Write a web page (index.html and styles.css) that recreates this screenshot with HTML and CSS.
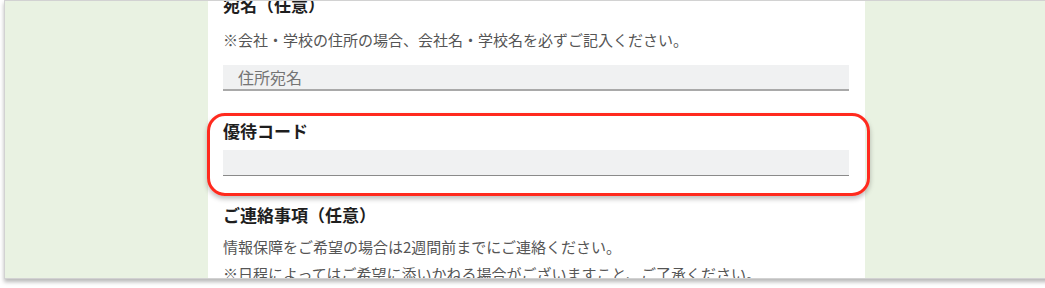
FILE: index.html
```html
<!DOCTYPE html>
<html lang="ja">
<head>
<meta charset="utf-8">
<link rel="stylesheet" href="styles.css">
</head>
<body>
<div class="shot">
  <div class="column">
    <h2 class="label label-first">宛名（任意）</h2>
    <p class="note">※会社・学校の住所の場合、会社名・学校名を必ずご記入ください。</p>
    <div class="field field-thick"><span class="placeholder">住所宛名</span></div>

    <div class="highlight">
      <h2 class="label">優待コード</h2>
      <div class="field field-thin"></div>
    </div>

    <h2 class="label label-third">ご連絡事項（任意）</h2>
    <p class="note note-a">情報保障をご希望の場合は2週間前までにご連絡ください。</p>
    <p class="note note-b">※日程によってはご希望に添いかねる場合がございますこと、ご了承ください。</p>
  </div>
</div>
</body>
</html>
```

FILE: styles.css
```css
html, body {
  margin: 0;
  padding: 0;
  background: #ffffff;
}

body {
  width: 1045px;
  height: 288px;
  overflow: hidden;
  font-family: "Noto Sans CJK JP", "Noto Sans", sans-serif;
}

.shot {
  margin-left: 4px;
  width: 1032px;
  height: 277px;
  border: 1px solid #d2d2d2;
  background: #e9f2e2;
  box-shadow: 0 3px 4px rgba(0, 0, 0, 0.28);
  overflow: hidden;
  padding-left: 203px;
  box-sizing: content-box;
}

.column {
  width: 657px;
  height: 100%;
  background: #ffffff;
  padding: 0 16px 0 15px;
  box-sizing: border-box;
  display: flex;
  flex-direction: column;
}

.label {
  margin: 0;
  font-size: 17px;
  line-height: 26px;
  font-weight: 700;
  color: #1e1e1e;
  white-space: nowrap;
}

.label-first {
  margin-top: -9px;
}

.note {
  margin: 10px 0 0;
  font-size: 15px;
  line-height: 24px;
  color: #555555;
  white-space: nowrap;
}

.field {
  background: #f0f1f2;
  box-sizing: border-box;
  display: flex;
  align-items: center;
  padding-left: 15px;
}

.field-thick {
  margin-top: 13px;
  height: 26px;
  border-bottom: 2px solid #a9a9a9;
}

.field-thin {
  margin-top: 6px;
  height: 26px;
  border-bottom: 1px solid #8a8a8a;
}

.placeholder {
  font-size: 16px;
  color: #747474;
  line-height: 24px;
}

.highlight {
  margin: 22px -21px 0 -16px;
  border: 3px solid #ff2a1e;
  border-radius: 18px;
  padding: 2px 18px 17px 13px;
  box-shadow: 0 3px 5px rgba(0, 0, 0, 0.25);
}

.label-third {
  margin-top: 6px;
}

.note-a {
  margin-top: 7px;
}

.note-b {
  margin-top: 3px;
}
```
